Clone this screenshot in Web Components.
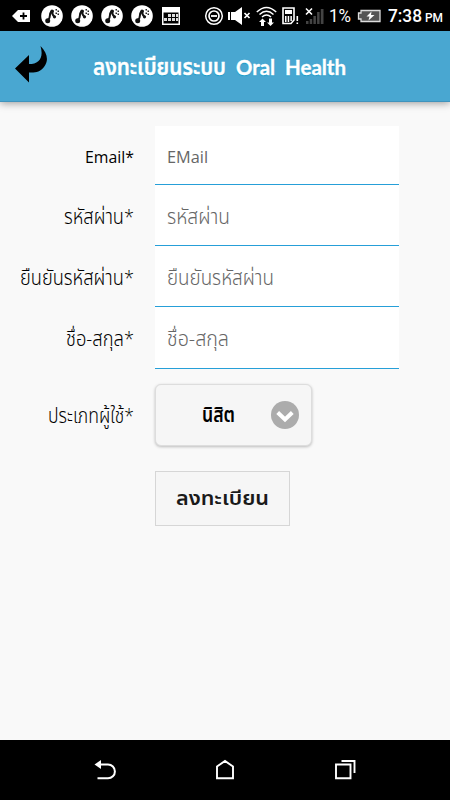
<!DOCTYPE html>
<html lang="th">
<head>
<meta charset="utf-8">
<meta name="viewport" content="width=device-width">
<title>ลงทะเบียนระบบ Oral Health</title>
<style>
html,body{margin:0;height:100%;background:#f9f9f9}
body{font-family:"Open Sans","Noto Sans Thai","Noto Sans","Liberation Sans",sans-serif}
.latin{font-size:21.500px;font-weight:700}
</style>
</head>
<body>
<app-screen>
  <status-bar slot="status"></status-bar>
  <app-header slot="header"><fit-text w="133">ลงทะเบียนระบบ</fit-text><fit-text class="latin" w="39">Oral</fit-text><fit-text class="latin" w="61">Health</fit-text></app-header>
  <register-form slot="main"></register-form>
  <nav-bar slot="nav"></nav-bar>
</app-screen>
<script>
const define=(name,html,init)=>customElements.define(name,class extends HTMLElement{
  constructor(){
    super();
    const t=document.createElement('template');
    t.innerHTML=html;
    this.attachShadow({mode:'open'}).append(t.content.cloneNode(true));
  }
  connectedCallback(){ if(init) init(this,this.shadowRoot); }
});

define('app-screen',`<style>:host{display:grid;grid-template-rows:31px 71px 638px 60px;width:450px;height:800px;overflow:hidden;background:#f9f9f9}</style>
<slot name="status"></slot><slot name="header"></slot><slot name="main"></slot><slot name="nav"></slot>`);

define('chat-dot',`<style>:host{display:block;width:22px;height:22px;margin-left:.5px}svg{display:block}</style>
<svg width="22" height="22" viewBox="0 0 22 22"><circle cx="11" cy="11" r="10.8" fill="#fff"/>
<path d="M6.800 15.500Q9 13 9 10T11.500 6.500Q10.800 9.500 13.300 11.500" fill="none" stroke="#111" stroke-width="2" stroke-linecap="round"/>
<circle cx="6.700" cy="15.700" r="2.500" fill="#111"/><circle cx="13.500" cy="11.800" r="1.600" fill="#111"/><circle cx="11" cy="6.300" r="1.700" fill="#111"/><path d="M14.500 4h1.500v1.500h-1.500ZM16.500 5.500H18V7h-1.500ZM14.500 7.500H16V9h-1.500ZM16.500 8.500H18V10h-1.500Z" fill="#222"/></svg>`);

define('status-bar',`<style>
:host{display:grid;grid-template-columns:30px repeat(4,30px) 30px 1fr;align-items:center;background:#000;color:#fff;padding:0 6px 0 10px;height:31px;box-sizing:border-box;font-family:Roboto,sans-serif}
svg{display:block}
.r{display:grid;grid-template-columns:24px 28px 25px 24px 24px 28px 31px 37px 19px;align-items:center;width:240px;justify-self:end}
.p{font-size:18px}.t{font-size:18.500px;font-weight:500}.m{font-size:13px;font-weight:500;padding-top:4px}
</style>
<svg width="22" height="16" viewBox="0 0 22 16"><path d="M2 8 8 2h12v12H8Z" fill="#fff"/><path d="M13.500 4.500v7M10 8h7" stroke="#000" stroke-width="1.800"/></svg>
<chat-dot></chat-dot><chat-dot></chat-dot><chat-dot></chat-dot><chat-dot></chat-dot>
<svg width="20" height="20" viewBox="0 0 20 20" style="margin-left:1px"><path d="M1 1h18v18H1Z" fill="#fff"/><path d="M2.500 6.500h15v11h-15Z" fill="#000"/><path d="M7 8h3v3H7Zm4 0h3v3h-3Zm4 0h2v3h-2ZM3 12h3v3H3Zm4 0h3v3H7Zm4 0h3v3h-3Zm4 0h2v3h-2Z" fill="#ddd"/></svg>
<div class="r">
<svg width="20" height="20" viewBox="0 0 20 20"><circle cx="10" cy="10" r="8.300" fill="none" stroke="#fff" stroke-width="1.500"/><circle cx="10" cy="10" r="5" fill="none" stroke="#fff" stroke-width="1.700"/><path d="M7 10h6" stroke="#fff" stroke-width="1.800"/></svg>
<svg width="24" height="20" viewBox="0 0 24 20"><path d="M0 6h2v8H0ZM3 6h4l7-5v18l-7-5H3Z" fill="#fff"/><path d="m16.500 7 5 5m0-5-5 5" stroke="#fff" stroke-width="1.700"/></svg>
<svg width="22" height="22" viewBox="0 0 22 22"><g fill="none" stroke="#fff" stroke-width="1.500"><path d="M.8 7q9.700-9 19.400 0M3.500 9.500q7-6.500 14 0M6 12q4.500-4 9 0"/></g><path d="m6.500 13.500 3.500 3.500H8v4H5v-4H3ZM14.500 21 11 17.500h2v-4h3v4h2Z" fill="#fff"/></svg>
<svg width="20" height="20" viewBox="0 0 20 20"><path d="M2 2h11v12l-3 3.500H2Z" fill="none" stroke="#fff" stroke-width="1.600"/><path d="M4 4h7v4H4ZM4 10h1.500v6H4Zm2.700 0h1.500v6H6.700Zm2.700 0h1.500v5H9.400ZM15.500 10h1.600v5h-1.600Zm0 6.500h1.600v1.600h-1.600Z" fill="#fff"/></svg>
<svg width="20" height="20" viewBox="0 0 20 20"><path d="m1 2.500 6 6m0-6-6 6" stroke="#fff" stroke-width="1.600"/><path d="M1 15h2.500v3H1Zm3.700-2h2.500v5H4.700Zm3.700-3h2.500v8H8.400Zm3.700-4h2.500v12h-2.500Zm3.700-3h2.700v15h-2.700Z" fill="#444"/></svg>
<div class="p"><fit-text w="22">1%</fit-text></div>
<svg width="24" height="14" viewBox="0 0 24 14"><path d="M4 1.500h19v11H4V10H1.500V4H4Z" fill="#555" stroke="#ddd" stroke-width="1.300"/><path d="m14.500 2.500-5 5h3l-1 4 6-5.500h-3.500Z" fill="#fff"/></svg>
<div class="t"><fit-text w="34">7:38</fit-text></div>
<div class="m"><fit-text w="18">PM</fit-text></div>
</div>`);

define('app-header',`<style>
:host{display:grid;grid-template-columns:78px 1fr;align-items:center;height:71px;padding-left:15px;box-sizing:border-box;background:#49a7d1;border-bottom:1px solid #3f93bd;box-shadow:0 1px 8px rgba(0,0,0,.4);color:#fff;font-size:23px;font-weight:600;line-height:30px;text-shadow:0 1px 1px #159bc8}
svg{display:block;margin-top:-4px}div{display:flex;align-items:baseline;gap:10px;-webkit-text-stroke:.4px #fff;padding-top:1px;font-family:Lato,"Noto Sans Thai","Noto Sans",sans-serif}
</style>
<svg width="33" height="38" viewBox="0 0 33 38"><path d="M0 23.500 14 10v9C24 19 29 13 25.500 1c7 7 8.500 15 3.500 21-4 5-9 6-15 5.500V37.500Z" fill="#000"/></svg>
<div><slot></slot></div>`);

define('form-row',`<style>
:host{display:grid;grid-template-columns:134px 1fr;column-gap:21px;align-items:center;color:#000;font-size:20.500px;font-weight:300}
:host(.en){font-size:17px;font-weight:400}
.l{justify-self:end;padding-top:3px}
:host(.en) .l{padding-top:1px}
</style><div class="l"><slot name="label"></slot></div><slot></slot>`);

define('text-field',`<style>
:host{display:flex;align-items:center;box-sizing:border-box;width:244px;height:var(--h,61px);padding:var(--pt,4px) 12px 0;background:#fff;border-bottom:1px solid #269fd8;color:#666}
</style><slot></slot>`);

define('select-button',`<style>
:host{display:grid;grid-template-columns:1fr 28px;align-items:center;box-sizing:border-box;width:157px;height:62px;padding:0 12px 0 46px;background:#f6f6f6;border:1px solid #ddd;border-radius:6px;box-shadow:0 1px 3px rgba(0,0,0,.25);font-weight:600;font-size:21px}
svg{display:block}
</style><slot></slot><svg width="28" height="28" viewBox="0 0 28 28"><circle cx="14" cy="14" r="14" fill="#acacac"/><path d="m6.700 11.500 7.300 7 7.300-7" fill="none" stroke="#fff" stroke-width="4"/></svg>`);

define('submit-button',`<style>
:host{display:flex;align-items:center;box-sizing:border-box;width:135px;height:55px;margin-left:155px;padding-left:20px;background:#f6f6f6;border:1px solid #d6d6d6;font-weight:600;font-size:19.500px;color:#1a1a1a;font-family:"Noto Sans Thai","Noto Sans",sans-serif}
</style><slot></slot>`);

define('register-form',`<style>
:host{display:block;padding-top:24px}
.s{margin-top:15px}submit-button{margin-top:25px}
</style>
<form-row class="en"><fit-text slot="label" w="49">Email*</fit-text><text-field style="--h:59px;--pt:3px"><fit-text w="41">EMail</fit-text></text-field></form-row>
<form-row><fit-text slot="label" w="70">รหัสผ่าน*</fit-text><text-field><fit-text w="63">รหัสผ่าน</fit-text></text-field></form-row>
<form-row><fit-text slot="label" w="114">ยืนยันรหัสผ่าน*</fit-text><text-field><fit-text w="107">ยืนยันรหัสผ่าน</fit-text></text-field></form-row>
<form-row><fit-text slot="label" w="68">ชื่อ-สกุล*</fit-text><text-field style="--h:62px"><fit-text w="62">ชื่อ-สกุล</fit-text></text-field></form-row>
<form-row class="s"><fit-text slot="label" w="86">ประเภทผู้ใช้*</fit-text><select-button><fit-text w="33">นิสิต</fit-text></select-button></form-row>
<submit-button><fit-text w="93">ลงทะเบียน</fit-text></submit-button>`);

define('nav-bar',`<style>
:host{display:grid;grid-template-columns:repeat(3,120px);justify-content:center;place-items:center;height:60px;background:#000}
svg{display:block}
</style>
<svg width="24" height="24" viewBox="0 0 24 24"><path d="M6 6.500h9a6.800 6.800 0 0 1 0 13.800H4.500" fill="none" stroke="#fff" stroke-width="2"/><path d="M1.500 6.500 8 2v9Z" fill="#fff"/></svg>
<svg width="24" height="24" viewBox="0 0 24 24"><path d="M4 20.300V8.500L12 3l8 5.500v11.800Z" fill="none" stroke="#fff" stroke-width="1.900"/></svg>
<svg width="24" height="24" viewBox="0 0 24 24"><path d="M3 6.500h14.500v13.800H3ZM8.500 3h13v12" fill="none" stroke="#fff" stroke-width="1.900"/></svg>`);

/* One line of text stretched or condensed to the width given in "w".
   Registered last, so that its ancestors' fonts apply when it measures. */
define('fit-text',`<style>:host{display:block;white-space:nowrap}
span{display:inline-block;transform-origin:0 50%}</style><span><slot></slot></span>`,(el,root)=>{
  const w=+el.getAttribute('w'), s=root.querySelector('span');
  el.style.width=w+'px';
  const n=s.getBoundingClientRect().width;
  if(n) s.style.transform=`scaleX(${w/n})`;
});
</script>
</body>
</html>
